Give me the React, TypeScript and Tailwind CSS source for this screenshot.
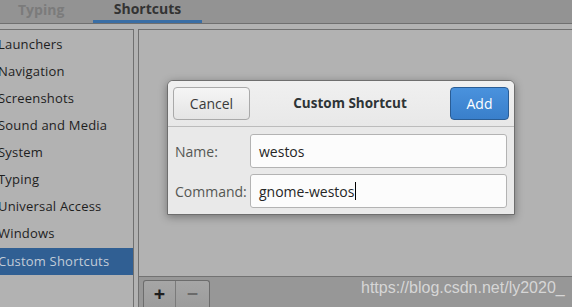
import React from "react";

const items = [
  "Launchers",
  "Navigation",
  "Screenshots",
  "Sound and Media",
  "System",
  "Typing",
  "Universal Access",
  "Windows",
  "Custom Shortcuts",
];

export default function App() {
  return (
    <div
      className="relative w-[572px] h-[307px] overflow-hidden bg-[#b2b2b2] flex flex-col text-[13px]"
      style={{ fontFamily: '"Open Sans", "DejaVu Sans", sans-serif' }}
    >
      {/* tab header */}
      <div className="h-[24px] shrink-0 bg-[#939393] border-b border-[#6f6f6f] flex items-stretch">
        <div className="w-[93px] flex items-center pl-[18px] pb-[4px] text-[14px] font-bold text-[#7b7b7b]">
          Typing
        </div>
        <div className="w-[109px] flex items-center justify-center pb-[4px] text-[14px] font-bold text-[#333333] border-b-[3px] border-[#3a6ea5]">
          Shortcuts
        </div>
      </div>

      {/* main */}
      <div className="flex-1 flex pt-[5px] min-h-0">
        <div className="w-[134px] shrink-0 border-t border-r border-[#707070] bg-[#b2b2b2] pt-[1px] overflow-hidden">
          {items.map((it) => {
            const sel = it === "Custom Shortcuts";
            return (
              <div
                key={it}
                className={
                  sel
                    ? "h-[27px] mt-[1px] flex items-center bg-[#305f93] text-[#c2ccd8] -ml-[2px] tracking-[0.2px]"
                    : "h-[27px] flex items-center text-[#1e1e1e] -ml-[2px] tracking-[0.2px]"
                }
              >
                {it}
              </div>
            );
          })}
        </div>
        <div className="w-[4px] shrink-0" />
        <div className="flex-1 flex flex-col border-t border-l border-[#707070]">
          <div className="flex-1 bg-[#b2b2b2]" />
          <div className="h-[31px] shrink-0 bg-[#979797] border-t border-[#727272] flex items-end pl-[4px]">
            <div className="flex h-[27px] border border-b-0 border-[#6c6c6c] rounded-t-[3px] overflow-hidden bg-gradient-to-b from-[#a6a6a6] to-[#9c9c9c]">
              <div className="w-[32px] flex items-center justify-center border-r border-[#7a7a7a] text-[#1e1e1e] text-[20px] font-bold leading-none">
                +
              </div>
              <div className="w-[33px] flex items-center justify-center text-[#6a6a6a] text-[20px] font-bold leading-none">
                −
              </div>
            </div>
          </div>
        </div>
      </div>

      {/* dialog */}
      <div className="absolute left-[167px] top-[80px] w-[348px] h-[135px] bg-[#e9e9e9] border border-[#6e6e6e] rounded-t-[6px] shadow-[0_2px_8px_rgba(0,0,0,0.35)] flex flex-col overflow-hidden">
        <div className="h-[46px] shrink-0 flex items-center px-[5px] bg-gradient-to-b from-[#f0f0f0] to-[#e8e8e8] border-b border-[#bcbcbc]">
          <div className="w-[77px] h-[33px] flex items-center justify-center rounded-[4px] border border-[#a9a9a9] bg-gradient-to-b from-[#f5f5f5] to-[#e4e4e4] text-[#3a3a3a] text-[14px]">
            Cancel
          </div>
          <div className="flex-1 text-center font-bold text-[#2e3436] text-[13.5px]">
            Custom Shortcut
          </div>
          <div className="w-[59px] h-[33px] flex items-center justify-center rounded-[4px] border border-[#2a5d95] bg-gradient-to-b from-[#4a92dd] to-[#397fcb] text-white text-[14px]">
            Add
          </div>
        </div>
        <div className="flex-1 flex flex-col pt-[7px] gap-[6px] pl-[7px] pr-[7px]">
          <div className="flex items-center h-[34px]">
            <div className="w-[75px] text-[#555753] text-[14px]">Name:</div>
            <div className="flex-1 h-full rounded-[3px] border border-[#b3b3b3] bg-[#fcfcfc] flex items-center pl-[8px] text-[14px] text-[#262626]">
              westos
            </div>
          </div>
          <div className="flex items-center h-[34px]">
            <div className="w-[75px] text-[#555753] text-[14px]">Command:</div>
            <div className="flex-1 h-full rounded-[3px] border border-[#b3b3b3] bg-[#fcfcfc] flex items-center pl-[8px] text-[14px] text-[#262626]">
              gnome-westos
              <span className="inline-block w-[1px] h-[18px] bg-black ml-[1px]" />
            </div>
          </div>
        </div>
      </div>

      {/* watermark */}
      <div
        className="absolute left-[361px] top-[276px] text-[16px] text-[#d6d6d6]"
        style={{ fontFamily: '"Liberation Sans", Arial, sans-serif' }}
      >
        https://blog.csdn.net/ly2020_
      </div>
    </div>
  );
}
